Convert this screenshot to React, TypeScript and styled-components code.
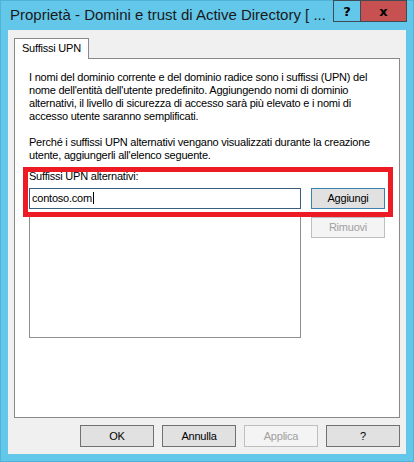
import React from "react";
import styled, { createGlobalStyle } from "styled-components";

const Global = createGlobalStyle`
  html, body {
    margin: 0;
    padding: 0;
    width: 414px;
    height: 462px;
    overflow: hidden;
    background: #62c6ea;
  }
  * { box-sizing: border-box; }
`;

const Window = styled.div`
  width: 414px;
  height: 462px;
  background: #63c7ea;
  border: 1px solid #4fb3d8;
  display: flex;
  flex-direction: column;
  font-family: "Liberation Sans", Arial, sans-serif;
  font-size: 11px;
  letter-spacing: -0.22px;
  color: #000;
`;

const TitleBar = styled.div`
  height: 29px;
  display: flex;
  align-items: flex-start;
  justify-content: space-between;
`;

const Title = styled.div`
  font-size: 15px;
  letter-spacing: 0;
  color: #1a1a1a;
  padding: 5px 0 0 9px;
  white-space: nowrap;
  line-height: 18px;
`;

const CaptionButtons = styled.div`
  display: flex;
  margin-right: 6px;
  margin-top: -1px;
`;

const CaptionButton = styled.div<{ $close?: boolean }>`
  width: ${(p) => (p.$close ? "46px" : "28px")};
  height: 22px;
  background: ${(p) => (p.$close ? "#c75050" : "transparent")};
  border: 1px solid #3f4a52;
  border-left-width: ${(p) => (p.$close ? "0" : "1px")};
  display: flex;
  align-items: center;
  justify-content: center;
  font-family: "DejaVu Sans", sans-serif;
  font-weight: bold;
  font-size: 13px;
  letter-spacing: 0;
  color: #000;
`;

const Client = styled.div`
  flex: 1;
  margin: 0 7px 7px 7px;
  background: #f0f0f0;
  padding: 8px 6px 7px 6px;
  display: flex;
  flex-direction: column;
`;

const TabStrip = styled.div`
  display: flex;
  height: 20px;
  position: relative;
  z-index: 1;
`;

const Tab = styled.div`
  width: 75px;
  height: 21px;
  background: #fff;
  border: 1px solid #898989;
  border-bottom: none;
  padding: 3px 0 0 7px;
  line-height: 13px;
  white-space: nowrap;
`;

const Panel = styled.div`
  height: 360px;
  background: #fff;
  border: 1px solid #898989;
  padding: 12px 14px 0 14px;
  display: flex;
  flex-direction: column;
`;

const Para = styled.p<{ $gap?: number }>`
  margin: 0 0 ${(p) => p.$gap ?? 13}px 0;
  line-height: 13px;
  white-space: nowrap;
`;

const FieldArea = styled.div`
  position: relative;
  display: flex;
  gap: 10px;
  margin-top: -5px;
`;

const LeftCol = styled.div`
  width: 273px;
  display: flex;
  flex-direction: column;
`;

const Label = styled.div`
  line-height: 13px;
  margin-bottom: 5px;
`;

const TextBox = styled.div`
  height: 21px;
  border: 1px solid #3c5d7e;
  background: #fff;
  padding: 3px 0 0 2px;
  line-height: 13px;
  display: flex;
  align-items: flex-start;
`;

const Caret = styled.span`
  display: inline-block;
  width: 1px;
  height: 12px;
  background: #000;
  margin-left: 1px;
`;

const ListBox = styled.div`
  margin-top: 3px;
  height: 126px;
  border: 1px solid #8e8e93;
  background: #fff;
`;

const RightCol = styled.div`
  display: flex;
  flex-direction: column;
  gap: 8px;
  padding-top: 18px;
`;

const Button = styled.div<{ $variant?: "default" | "disabled" | "normal" }>`
  width: 74px;
  height: 21px;
  display: flex;
  align-items: center;
  justify-content: center;
  line-height: 13px;
  border: 1px solid
    ${(p) =>
      p.$variant === "default"
        ? "#3c7fb1"
        : p.$variant === "disabled"
        ? "#bfbfbf"
        : "#707070"};
  background: ${(p) => (p.$variant === "disabled" ? "#f4f4f4" : "#e1e1e1")};
  color: ${(p) => (p.$variant === "disabled" ? "#a0a0a0" : "#000")};
`;

const Highlight = styled.div`
  position: absolute;
  left: -6px;
  top: -3px;
  width: 370px;
  height: 50px;
  border: 5px solid #ed1c24;
  pointer-events: none;
`;

const Footer = styled.div`
  display: flex;
  justify-content: flex-end;
  gap: 8px;
  margin-top: 7px;
`;

const FooterButton = styled(Button)`
  height: 22px;
`;

export default function App() {
  return (
    <>
      <Global />
      <Window>
        <TitleBar>
          <Title>Proprietà - Domini e trust di Active Directory [ ...</Title>
          <CaptionButtons>
            <CaptionButton>?</CaptionButton>
            <CaptionButton $close>x</CaptionButton>
          </CaptionButtons>
        </TitleBar>
        <Client>
          <TabStrip>
            <Tab>Suffissi UPN</Tab>
          </TabStrip>
          <Panel>
            <Para>
              I nomi del dominio corrente e del dominio radice sono i suffissi (UPN) del
              <br />
              nome dell'entità dell'utente predefinito. Aggiungendo nomi di dominio
              <br />
              alternativi, il livello di sicurezza di accesso sarà più elevato e i nomi di
              <br />
              accesso utente saranno semplificati.
            </Para>
            <Para $gap={13}>
              Perché i suffissi UPN alternativi vengano visualizzati durante la creazione
              <br />
              utente, aggiungerli all'elenco seguente.
            </Para>
            <FieldArea>
              <LeftCol>
                <Label>Suffissi UPN alternativi:</Label>
                <TextBox>
                  contoso.com
                  <Caret />
                </TextBox>
                <ListBox />
              </LeftCol>
              <RightCol>
                <Button $variant="default">Aggiungi</Button>
                <Button $variant="disabled">Rimuovi</Button>
              </RightCol>
              <Highlight />
            </FieldArea>
          </Panel>
          <Footer>
            <FooterButton>OK</FooterButton>
            <FooterButton>Annulla</FooterButton>
            <FooterButton $variant="disabled">Applica</FooterButton>
            <FooterButton>?</FooterButton>
          </Footer>
        </Client>
      </Window>
    </>
  );
}
